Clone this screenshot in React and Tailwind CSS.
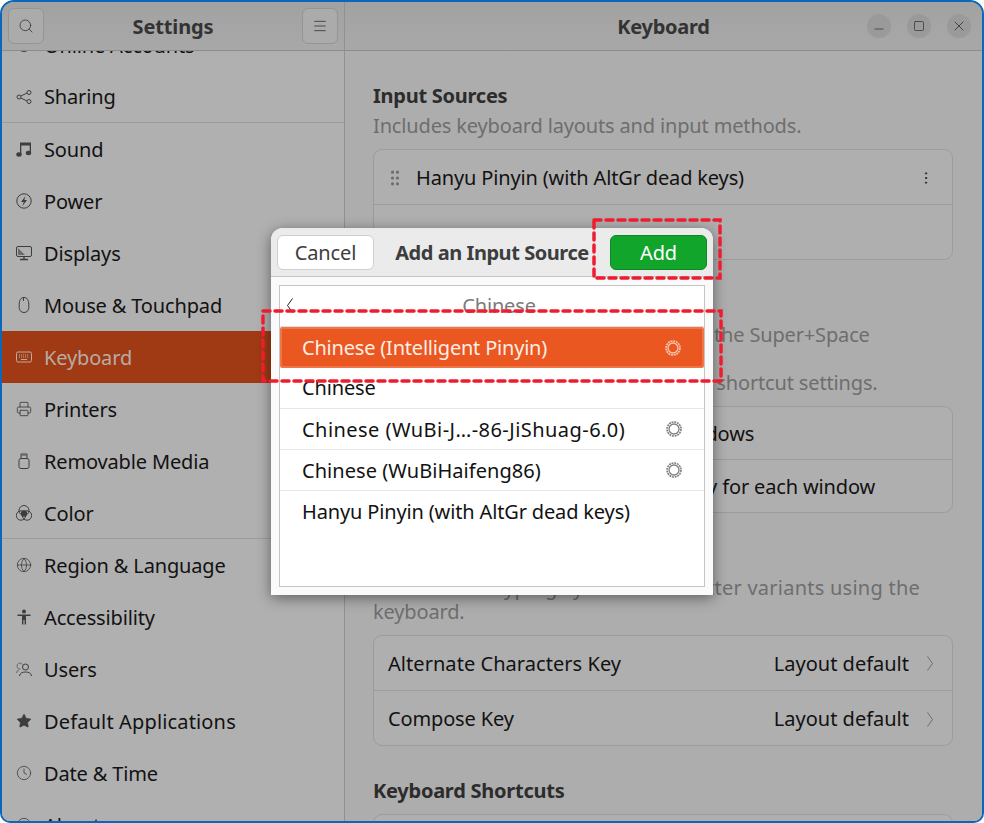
import React from 'react';
import { Search, Menu, Minus, Square, X, Plus, EllipsisVertical, GripVertical, Globe, Clock, Star, Printer } from 'lucide-react';

const ico = 'w-4 h-4';

const Share = () => (
  <svg className={ico} viewBox="0 0 16 16" fill="none" stroke="currentColor">
    <circle cx="3" cy="8" r="2" /><circle cx="13" cy="3.5" r="2" /><circle cx="13" cy="12.5" r="2" />
    <path d="M5 7l6-3M5 9l6 3" />
  </svg>
);
const Note = () => (
  <svg className={ico} viewBox="0 0 16 16" fill="currentColor">
    <path d="M4 1.500h11v10.500h-1.300V4.500H5.300V14H4z" />
    <ellipse cx="3" cy="13.500" rx="2.700" ry="2.200" />
    <ellipse cx="12.500" cy="12" rx="2.700" ry="2.200" />
  </svg>
);
const Power = () => (
  <svg className={ico} viewBox="0 0 16 16" fill="none" stroke="currentColor">
    <circle cx="8" cy="8" r="7.2" />
    <path d="M9.500 3 5 9h2.700L6.500 13 11 7H8.300z" fill="currentColor" stroke="none" />
  </svg>
);
const Display = () => (
  <svg className={ico} viewBox="0 0 16 16" fill="none" stroke="currentColor">
    <rect x="0.5" y="1.5" width="15" height="10" rx="1.5" />
    <path d="M2 3l7 7H2z" fill="currentColor" stroke="none" opacity=".6" />
    <path d="M8 12v2M4 14.5h8" strokeWidth="1.4" />
  </svg>
);
const MouseIcon = () => (
  <svg className={ico} viewBox="0 0 16 16" fill="none" stroke="currentColor">
    <path d="M8 .5c3 0 4.800 2.500 4.800 7v3c0 3-2 5-4.800 5s-4.800-2-4.800-5v-3c0-4.500 1.800-7 4.800-7z" />
    <path d="M7.500 1v3" />
  </svg>
);
const Kbd = () => (
  <svg className={ico} viewBox="0 0 16 16" fill="none" stroke="currentColor">
    <rect x="0.5" y="3" width="15" height="10" rx="1.5" />
    <path d="M3 6h10M3 8h10" strokeDasharray="1 1" /><path d="M5 10.5h6" />
  </svg>
);
const Usb = () => (
  <svg className={ico} viewBox="0 0 16 16" fill="none" stroke="currentColor">
    <rect x="3" y="5.5" width="10" height="10" rx="2" />
    <path d="M5 1h6v4.5H5z" /><path d="M6.500 2.500h1M8.500 2.500h1" />
  </svg>
);
const Color = () => (
  <svg className={ico} viewBox="0 0 16 16" fill="none" stroke="currentColor">
    <circle cx="8" cy="5.500" r="5" /><circle cx="5" cy="10.500" r="4.700" /><circle cx="11" cy="10.500" r="4.700" />
    <circle cx="8" cy="8.500" r="2.800" fill="currentColor" />
  </svg>
);
const Access = () => (
  <svg className={ico} viewBox="0 0 16 16" fill="currentColor">
    <circle cx="8" cy="2.500" r="2" />
    <path d="M1.500 5.500h13v1.400H10v8.600H8.600v-4.500H7.400v4.500H6V6.900H1.500z" />
  </svg>
);
const Users = () => (
  <svg className={ico} viewBox="0 0 16 16" fill="none" stroke="currentColor">
    <circle cx="9.500" cy="6" r="3" />
    <path d="M3.500 15c.3-3 3-4 6-4s5.700 1 6 4" />
    <path d="M6.500 3.500A3 3 0 1 0 4.500 8M.5 12c.2-1.500 1-2.500 2.500-3" opacity=".6" />
  </svg>
);
const Gear = ({ light }) => (
  <svg className={`w-4 h-4 ${light ? 'text-[#f7c9b4]' : 'text-[#7f7f7f]'}`} viewBox="0 0 16 16" fill="none" stroke="currentColor">
    <circle cx="8" cy="8" r="5" strokeWidth="1.300" />
    <circle cx="8" cy="8" r="7" strokeWidth="1.600" strokeDasharray="2 .75" />
  </svg>
);
const Chevron = ({ left, className }) => (
  <svg className={className} width="6" height="15" viewBox="0 0 6 15" fill="none" stroke="currentColor">
    <path d={left ? 'M5.500 .5 .5 7.500l5 7' : 'M.5 .5l5 7-5 7'} />
  </svg>
);

const Dashed = ({ className, w, h }) => (
  <svg className={`absolute ${className}`} width={w} height={h} viewBox={`0 0 ${w} ${h}`} fill="none">
    <rect x="2" y="2" width={w - 4} height={h - 4} stroke="#ee1c2e" strokeWidth="3.500" strokeDasharray="7 5" strokeLinecap="round" />
  </svg>
);

const rows = [
  { label: 'Online Accounts', icon: <Globe className={ico} strokeWidth={1.2} /> },
  { label: 'Sharing', icon: <Share />, sep: true, flat: true },
  { label: 'Sound', icon: <Note /> },
  { label: 'Power', icon: <Power /> },
  { label: 'Displays', icon: <Display /> },
  { label: 'Mouse & Touchpad', icon: <MouseIcon /> },
  { label: 'Keyboard', icon: <Kbd />, active: true },
  { label: 'Printers', icon: <Printer className={ico} strokeWidth={1.3} /> },
  { label: 'Removable Media', icon: <Usb /> },
  { label: 'Color', icon: <Color />, sep: true },
  { label: 'Region & Language', icon: <Globe className={ico} strokeWidth={1.2} /> },
  { label: 'Accessibility', icon: <Access /> },
  { label: 'Users', icon: <Users /> },
  { label: 'Default Applications', icon: <Star className={ico} fill="currentColor" strokeWidth={1} />, wide: true },
  { label: 'Date & Time', icon: <Clock className={ico} strokeWidth={1.2} /> },
  { label: 'About', icon: <Clock className={ico} strokeWidth={1.2} /> },
];

const SideRow = ({ row }) => (
  <div className={`h-[52px] shrink-0 flex items-center gap-3 pl-[14px] ${row.active ? 'bg-[#9f3a15] text-[#b9aca5]' : 'text-[#121212]'} ${row.sep ? 'border-b border-[#9c9c9c]' : ''}`}>
    <span className={row.active ? 'text-[#b9aca5]' : 'text-[#3d3d3d]'}>{row.icon}</span>
    <span className={`${row.flat ? '' : 'translate-y-px'} ${row.wide ? 'tracking-[0.15px]' : ''}`}>{row.label}</span>
  </div>
);

const Heading = ({ children }) => <h2 className="font-bold text-[#2c2c2c] leading-6 tracking-[-0.25px]">{children}</h2>;
const Desc = ({ children }) => <p className="text-[#6e6e6e] leading-6">{children}</p>;

const CardRow = ({ children, last }) => (
  <div className={`h-[55px] flex items-center px-[14px] pt-px text-[#121212] ${last ? '' : 'border-b border-[#9c9c9c]'}`}>{children}</div>
);

const Layout = () => (
  <div className="ml-auto flex items-center">
    <span className="tracking-[0px]">Layout default</span>
    <Chevron className="ml-[18px] mr-[5px] text-[#6e6e6e]" />
  </div>
);

const Radio = () => <span className="w-4 h-4 mr-[13px] rounded-full border border-[#8c8c8c]" />;

const ListRow = ({ label, gear, track }) => (
  <div className="h-[41px] shrink-0 flex items-center pl-[22px] pr-[22px] border-b border-[#e6e6e6] text-[#121212]">
    <span className={track}>{label}</span>
    {gear && <span className="ml-auto"><Gear /></span>}
  </div>
);

export default function App() {
  return (
    <div className="relative w-[984px] h-[823px] bg-white overflow-hidden text-[20px] tracking-[-0.15px]" style={{ fontFamily: '"Noto Sans", sans-serif' }}>
      <div className="h-full rounded-t-[14px] rounded-b-[10px] border-2 border-[#0a67b9] bg-[#aeaeae] flex flex-col overflow-hidden">
        {/* barra de titulo */}
        <header className="h-[49px] shrink-0 flex border-b border-[#8c8c8c] bg-gradient-to-b from-[#a2a2a2] to-[#a8a8a8]">
          <div className="w-[343px] shrink-0 flex items-center justify-between px-[6px] border-r border-[#919191]">
            <button className="w-[36px] h-[36px] rounded-[6px] border border-[#959595] bg-[#ababab] flex items-center justify-center text-[#333]">
              <Search className="w-4 h-4" strokeWidth={1.2} />
            </button>
            <span className="font-bold text-[#333] translate-y-px">Settings</span>
            <button className="w-[36px] h-[36px] rounded-[6px] border border-[#959595] bg-[#ababab] flex items-center justify-center text-[#333]">
              <Menu className="w-4 h-4" strokeWidth={1.2} />
            </button>
          </div>
          <div className="flex-1 relative flex items-center justify-center">
            <span className="font-bold text-[#333] tracking-[-0.25px] translate-y-px">Keyboard</span>
            <div className="absolute right-[11px] top-[12px] flex gap-4 text-[#2e2e2e]">
              <span className="w-6 h-6 rounded-full bg-[#9a9a9a] flex items-center justify-center"><Minus className="w-3.5 h-3.5 translate-y-[3px]" strokeWidth={1.2} /></span>
              <span className="w-6 h-6 rounded-full bg-[#9a9a9a] flex items-center justify-center"><Square className="w-3 h-3" strokeWidth={1.4} /></span>
              <span className="w-6 h-6 rounded-full bg-[#9a9a9a] flex items-center justify-center"><X className="w-4 h-4" strokeWidth={1.2} /></span>
            </div>
          </div>
        </header>

        <div className="flex-1 min-h-0 flex">
          {/* lista lateral */}
          <aside className="w-[343px] shrink-0 border-r border-[#919191] bg-[#b0b0b0] overflow-hidden">
            <div className="mt-[-32px] flex flex-col">
              {rows.map((r) => <SideRow key={r.label} row={r} />)}
            </div>
          </aside>

          {/* contenido */}
          <main className="flex-1 min-w-0 overflow-hidden bg-[#adadad] pl-[28px] pr-[29px] pt-[33px]">
            <Heading>Input Sources</Heading>
            <div className="mt-[6px]"><Desc>Includes keyboard layouts and input methods.</Desc></div>
            <div className="mt-[11px] h-[111px] rounded-[9px] border border-[#9c9c9c] bg-[#afafaf]">
              <CardRow>
                <GripVertical className="w-5 h-5 -ml-[3px] mr-[11px] text-[#6e6e6e]" strokeWidth={1.8} />
                <span>Hanyu Pinyin (with AltGr dead keys)</span>
                <EllipsisVertical className="w-4 h-4 ml-auto mr-[4px] text-[#222]" strokeWidth={1.5} />
              </CardRow>
              <CardRow last>
                <Plus className="w-4 h-4 mx-auto text-[#222]" strokeWidth={1.2} />
              </CardRow>
            </div>

            <div className="mt-[33px]"><Heading>Input Source Switching</Heading></div>
            <div className="mt-[6px]">
              <Desc>Input sources can be switched using the Super+Space<br />keyboard shortcut.<br />This can be changed in the keyboard shortcut settings.</Desc>
            </div>
            <div className="mt-[11px] h-[107px] rounded-[9px] border border-[#9c9c9c] bg-[#afafaf]">
              <div className="h-[53px] flex items-center px-[14px] pt-px text-[#121212] border-b border-[#9c9c9c]"><Radio />Use the same source for all windows</div>
              <div className="h-[52px] flex items-center px-[14px] pt-px text-[#121212]"><Radio />Switch input sources individually for each window</div>
            </div>

            <div className="mt-[33px]"><Heading>Type Special Characters</Heading></div>
            <div className="mt-[6px]">
              <Desc><span className="tracking-[0.25px]">Methods for typing symbols and letter variants using the</span><br />keyboard.</Desc>
            </div>
            <div className="mt-[11px] h-[111px] rounded-[9px] border border-[#9c9c9c] bg-[#afafaf]">
              <CardRow>
                <span className="tracking-[0.05px]">Alternate Characters Key</span>
                <Layout />
              </CardRow>
              <CardRow last>
                <span>Compose Key</span>
                <Layout />
              </CardRow>
            </div>

            <div className="mt-[33px]"><Heading>Keyboard Shortcuts</Heading></div>
            <div className="mt-[11px] h-[55px] rounded-[9px] border border-[#9c9c9c] bg-[#afafaf]" />
          </main>
        </div>
      </div>

      {/* dialogo */}
      <div className="absolute left-[271px] top-[228px] w-[442px] h-[367px] flex flex-col rounded-t-[12px] bg-[#fafafa] shadow-[0_3px_14px_rgba(0,0,0,0.45)]">
        <div className="h-[49px] shrink-0 flex items-center justify-between px-[6px] rounded-t-[12px] bg-[#ebebeb] border-b border-[#c6c6c6]">
          <button className="w-[97px] h-[35px] rounded-[6px] border border-[#cfcfcf] bg-white text-[#3d3d3d]"><span className="inline-block translate-y-px">Cancel</span></button>
          <span className="font-bold text-[#3d3d3d] whitespace-nowrap tracking-[-0.45px] translate-y-px">Add an Input Source</span>
          <button className="w-[97px] h-[35px] rounded-[6px] border border-[#0e8526] bg-[#12a52b] text-white"><span className="inline-block translate-y-px">Add</span></button>
        </div>
        <div className="flex-1 min-h-0 m-2 border border-[#c4c4c4] bg-white flex flex-col overflow-hidden">
          <div className="h-[41px] shrink-0 relative flex items-center justify-center border-b border-[#e0e0e0] text-[#7b7b7b]">
            <Chevron left className="absolute left-[7px] top-[12px] text-[#222]" />
            <span className="ml-[14px]">Chinese</span>
          </div>
          <div className="h-[41px] shrink-0 flex items-center pl-[20px] pr-[21px] bg-[#ea5721] border-2 border-[#f0764a] rounded-[2px] text-[#fdeee7]">
            <span className="tracking-[-0.2px]">Chinese (Intelligent Pinyin)</span>
            <span className="ml-auto"><Gear light /></span>
          </div>
          <ListRow label="Chinese" />
          <ListRow label="Chinese (WuBi-J…-86-JiShuag-6.0)" gear track="tracking-[0.45px] translate-y-px" />
          <ListRow label="Chinese (WuBiHaifeng86)" gear track="tracking-[0.05px] translate-y-px" />
          <div className="h-[41px] shrink-0 flex items-center pl-[22px] text-[#121212]">Hanyu Pinyin (with AltGr dead keys)</div>
        </div>
      </div>

      {/* marcas rojas */}
      <Dashed className="left-[592px] top-[218px]" w={130} h={62} />
      <Dashed className="left-[261px] top-[309px]" w={462} h={74} />
    </div>
  );
}
